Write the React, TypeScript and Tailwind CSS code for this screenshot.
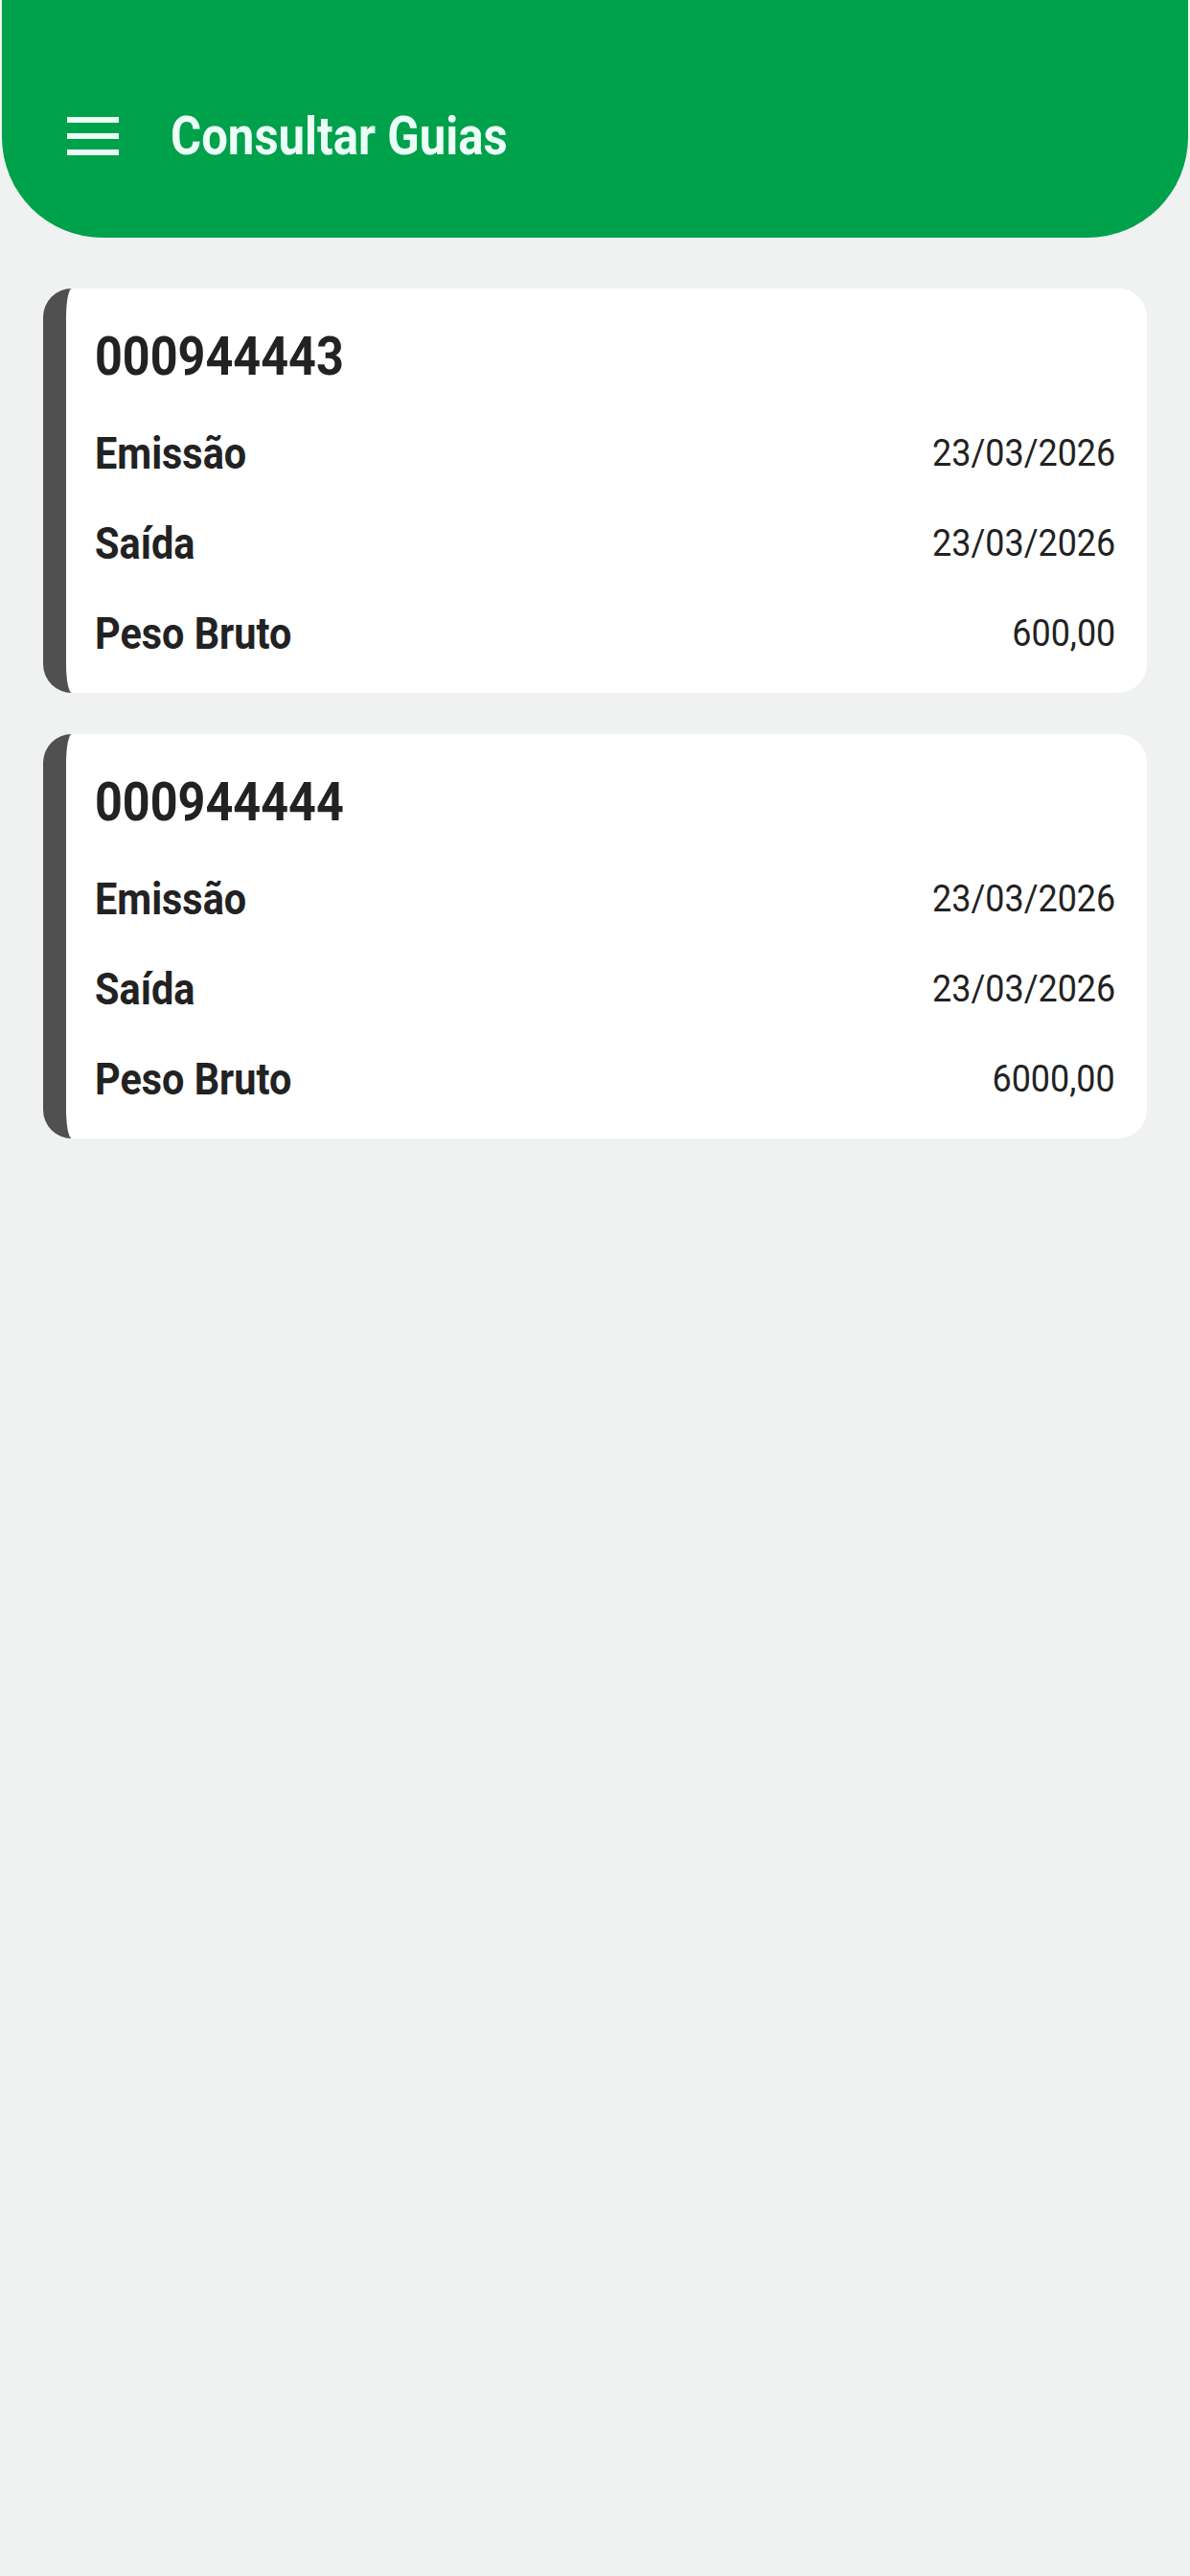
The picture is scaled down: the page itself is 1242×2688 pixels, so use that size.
import React from "react"

type Guia = {
  numero: string
  emissao: string
  saida: string
  pesoBruto: string
}

const guias: Guia[] = [
  { numero: "000944443", emissao: "23/03/2026", saida: "23/03/2026", pesoBruto: "600,00" },
  { numero: "000944444", emissao: "23/03/2026", saida: "23/03/2026", pesoBruto: "6000,00" },
]

export default function App() {
  return (
    <main
      className="min-h-screen w-full bg-[#f0f2f1]"
      style={{ fontFamily: "Roboto, 'Noto Sans', sans-serif" }}
    >
      {/* Header */}
      <header className="mx-[2px] flex h-[248px] items-start rounded-b-[105px] bg-[#00a14b] pl-[68px] pt-[100px]">
        <div className="flex h-[84px] items-center gap-[54px]">
          <button className="flex h-[40px] w-[54px] flex-col justify-between" aria-label="Menu">
            <span className="h-[6px] w-full bg-[#ebfff7]" />
            <span className="h-[6px] w-full bg-[#ebfff7]" />
            <span className="h-[6px] w-full bg-[#ebfff7]" />
          </button>
          <h1 className="inline-block origin-left scale-x-[0.877] text-[56px] leading-none font-bold whitespace-nowrap text-[#ebfff7]">
            Consultar Guias
          </h1>
        </div>
      </header>

      {/* Lista de guias */}
      <section className="flex flex-col gap-[43px] px-[45px] pt-[53px]">
        {guias.map((g) => (
          <GuiaCard key={g.numero} guia={g} />
        ))}
      </section>
    </main>
  )
}

function GuiaCard({ guia }: { guia: Guia }) {
  return (
    <div className="flex h-[422px] flex-col rounded-[30px] border-l-[24px] border-[#505050] bg-white pr-[33px] pl-[30px] pt-[17px]">
      <div className="flex h-[108px] items-center">
        <span className="inline-block origin-left scale-x-[0.915] text-[55px] leading-none font-bold text-[#222222]">
          {guia.numero}
        </span>
      </div>
      <Row label="Emissão" value={guia.emissao} />
      <Row label="Saída" value={guia.saida} />
      <Row label="Peso Bruto" value={guia.pesoBruto} />
    </div>
  )
}

function Row({ label, value }: { label: string; value: string }) {
  return (
    <div className="flex h-[94px] items-center justify-between">
      <span className="inline-block origin-left scale-x-[0.9] text-[46px] leading-none font-bold whitespace-nowrap text-[#222222]">
        {label}
      </span>
      <span className="inline-block origin-right scale-x-[0.945] text-[38px] leading-none text-[#222222]">
        {value}
      </span>
    </div>
  )
}
